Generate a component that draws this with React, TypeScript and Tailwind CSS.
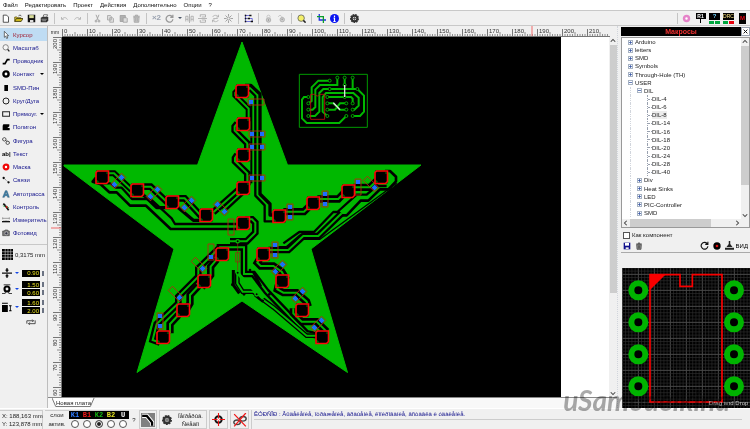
import type { ReactNode } from 'react'

const menu = ['Файл', 'Редактировать', 'Проект', 'Действия', 'Дополнительно', 'Опции', '?']

const icons: Record<string, ReactNode> = {
  new: <path d="M3 1.500h4.500L10 4v7H3z" fill="#fff" stroke="#222" />,
  open: <><path d="M1 10V4h3l1 1h4v2" fill="#e8d44a" stroke="#554a00" /><path d="M1 10l2-4h9l-2.500 4z" fill="#c9b61c" stroke="#332d00" /><path d="M6 2.500c2-1.500 3-1 4 .5" fill="none" stroke="#222" /></>,
  save: <><path d="M1 1h10v10H1z" fill="#111" /><path d="M3 1.500h6v4H3z" fill="#d8dc9a" /><path d="M4 8h4.500v3H4z" fill="#ddd" /></>,
  print: <><path d="M4 4l1-3h5L9 4z" fill="#fff" stroke="#222" strokeWidth=".8" /><path d="M1 5l2-1h8v5l-2 2H1z" fill="#333" /><path d="M2 7h7M3 9h5" stroke="#ccc" strokeWidth=".8" /></>,
  undo: <path d="M2 4v3h3M2.500 7C5 4 8 4 10 7.500" fill="none" stroke="#a8a8a8" />,
  redo: <path d="M10 4v3H7M9.500 7C7 4 4 4 2 7.500" fill="none" stroke="#a8a8a8" />,
  cut: <path d="M4 1l3 7M8 1L5 8M3 8.500h2v2H3zM7 8.500h2v2H7z" fill="none" stroke="#a5a5a5" strokeWidth="1.300" />,
  copy: <path d="M2 2h4l1 1v5H2zM5 5h4l1 1v5H5z" fill="#ddd" stroke="#a0a0a0" />,
  paste: <><path d="M1.500 2h7v8h-7z" fill="#b0b0b0" stroke="#999" /><path d="M5.500 5H10l1 1v5H5.500z" fill="#ddd" stroke="#999" /></>,
  trash: <path d="M1.500 3h9M4.500 2.500V1.500h3v1M2.500 4h7L9 11H3zM5 5v5M7 5v5" fill="#ccc" stroke="#999" />,
  rotate: <path d="M9.500 3.500A4.500 4.500 0 1 0 10.500 7M10.500 1v3.500H7" fill="none" stroke="#999" strokeWidth="1.700" />,
  mirrorH: <path d="M6 0v12M4 3H1v7M4 3v7M8 3h3v7M8 3v7M1 7h3M8 7h3" fill="none" stroke="#a0a0a0" />,
  mirrorV: <path d="M0 6h12M3 4V1h7v3M3 8v3h7V8M5 4h5M5 8h5" fill="none" stroke="#a0a0a0" />,
  align: <path d="M2 4c2-3 6-3 8 0M10 8c-2 3-6 3-8 0M3 6h6M10 1v3H7M2 11V8h3" fill="none" stroke="#a8a8a8" />,
  burst: <><path d="M6 0v3M6 9v3M0 6h3M9 6h3M2 2l2 2M10 2L8 4M2 10l2-2M10 10L8 8" stroke="#888" /><circle cx="6" cy="6" r="2" fill="none" stroke="#888" /></>,
  nodes: <><path d="M2 1v10M2 2h6M2 6h3M2 10h8M8 6h3v4" fill="none" stroke="#4a4ad0" /><path d="M1 1h2v2H1zM1 5h2v2H1zM1 9h2v2H1zM7 1h3v2H7zM5 5h3v2H5zM9 9h3v2H9z" fill="#111" /></>,
  lock: <><path d="M4 5V3c0-2 4-2 4 0v2" fill="none" stroke="#bbb" /><circle cx="6" cy="8" r="3" fill="#ccc" stroke="#aaa" /><path d="M6 7v2" stroke="#888" /></>,
  unlock: <><path d="M2 4c0-3 4-3 5 1" fill="none" stroke="#bbb" /><circle cx="7" cy="7.500" r="3" fill="#ccc" stroke="#aaa" /><path d="M6 7h2" stroke="#888" /></>,
  zoom: <><circle cx="5.500" cy="5.500" r="4.300" fill="#f4f06a" stroke="#555" /><path d="M8.500 8.500l3 3" stroke="#222" strokeWidth="2" /></>,
  crop: <><path d="M3 0v8h9" fill="none" stroke="#1b2ee0" strokeWidth="1.700" /><path d="M0 3.500h8.500V12" fill="none" stroke="#0a9c2a" strokeWidth="1.700" /></>,
  info: <><circle cx="6" cy="6" r="6" fill="#0a14f0" /><path d="M6 2v2M4.800 5.500H6V10M4.500 10h3" fill="none" stroke="#fff" strokeWidth="1.600" /></>,
  gear: <><circle cx="6" cy="6" r="5" fill="#333" stroke="#333" strokeWidth="2" strokeDasharray="2.200 1.200" /><circle cx="6" cy="6" r="2.300" fill="#eee" /><path d="M6 3v6M3 6h6" stroke="#444" /></>,
  ring: <circle cx="6" cy="6" r="3.300" fill="#fff" stroke="#e583c9" strokeWidth="3.300" />,
  pointer: <path d="M3.500 .5v9l2-1.800 1.500 3.600 1.700-.8-1.500-3.400h2.700z" fill="#fff" stroke="#222" strokeWidth=".9" />,
  magnify: <><circle cx="5.500" cy="5" r="4" fill="#f6f6f6" stroke="#555" /><path d="M8.500 8l2.500 3" stroke="#222" strokeWidth="2" /></>,
  track: <path d="M1 10h3.500L8 4h3.500" fill="none" stroke="#000" strokeWidth="2.500" />,
  pad: <circle cx="6" cy="6" r="3.900" fill="#fff" stroke="#000" strokeWidth="3.600" />,
  smd: <path d="M3.500 1.500h5.500v9H3.500z" />,
  circle: <circle cx="6" cy="6" r="4.500" fill="none" stroke="#222" strokeWidth="1.500" />,
  rect: <path d="M1 2.500h10.500v7H1z" fill="none" stroke="#222" strokeWidth="1.600" />,
  polygon: <path d="M2 2h9v3L8 7.500h3.500V11H1V4z" />,
  figure: <><path d="M3.500 .8l2.500 1.500v2.500L3.500 6.200 1 4.800V2.300zM8.500 6l2.500 1.400v2.500l-2.500 1.400L6 9.900V7.400z" fill="#eee" stroke="#222" strokeWidth="1.100" /><path d="M6 5l2 2" stroke="#222" /></>,
  mask: <circle cx="6" cy="6" r="3.500" fill="#fff" stroke="#f00606" strokeWidth="3.300" />,
  link: <><circle cx="2.500" cy="3" r="1.700" /><circle cx="9.800" cy="9.500" r="1.700" /><path d="M2.500 3l7.300 6.500" stroke="#444" strokeDasharray="2 1" /></>,
  auto: <path d="M1 11L5 1h2.500L11 11H8.500l-.8-2.500H4.500L3.500 11zM5 6.500h2.500L6.300 3z" fill="#3d80a8" stroke="#234f6e" strokeWidth=".6" fillRule="evenodd" />,
  check: <><path d="M2 1l3 3M5 4l5 7" stroke="#111" strokeWidth="2.500" /><path d="M2 4l2 2M8 5l2 2" stroke="#0a9c2a" strokeWidth="1.500" /><path d="M6 5l2 2" stroke="#d11" strokeWidth="2" /></>,
  measure: <><path d="M1 3.500h10M1 2v3M11 2v3" stroke="#777" /><path d="M0 8.500h12" stroke="#111" strokeWidth="2" /><path d="M3 6.500v1M6 6v1.500M9 6.500v1" stroke="#555" /></>,
  photo: <><path d="M1 3h2.500l1-1.500h4l1 1.500H11v7H1z" fill="#777" stroke="#444" /><circle cx="6.500" cy="6.500" r="2.300" fill="#334" stroke="#ccc" /></>,
  thickness: <path d="M6 0v3M4.500 2L6 4l1.500-2M6 12V9M4.500 10L6 8l1.500 2M0 6h12" fill="none" stroke="#111" strokeWidth="1.500" />,
  ringSize: <><circle cx="6" cy="6" r="3" fill="none" stroke="#000" strokeWidth="2.500" /><path d="M2 1h8M0 11.500h4M8 11.500h4M4 8v3M8 8v3" stroke="#111" /></>,
  rectSize: <path d="M0 3.500h7V12H0zM0 1h7v1H0zM9.500 4h1v7h-1zM8.500 4h3v1h-3zM8.500 10h3v1h-3z" />,
  swap: <path d="M1 8V4.500h8M7.500 3L9 4.500 7.500 6M11 4v4H3M4.500 6.500L3 8l1.500 1.500" fill="none" stroke="#333" />,
  grid: <><path d="M0 0h12v12H0z" fill="#000" /><path d="M3.500 0v12M6.500 0v12M9.500 0v12M0 3h12M0 6h12M0 9h12" stroke="#ddd" strokeWidth=".6" /></>,
  saveBlue: <><path d="M1 1h10v10H1z" fill="#10108c" /><path d="M3 1.500h6v4H3z" fill="#fff" /><path d="M4 8h4.500v2.500H4z" fill="#eee" /></>,
  trashDark: <path d="M1.500 3h9M4.500 2.500V1.500h3v1M2.500 4h7L9 11H3zM5 5v5M7 5v5" fill="#999" stroke="#333" />,
  rotateDark: <path d="M9.500 3.500A4.500 4.500 0 1 0 10.500 7M10.500 1v3.500H7" fill="none" stroke="#111" strokeWidth="1.500" />,
  target: <><circle cx="6" cy="6" r="5.500" /><circle cx="6" cy="6" r="2" fill="#e01010" /></>,
  stamp: <path d="M5 0h2v4l3 4H2l3-4zM0 9h12v2.500H0z" fill="#222" />,
  cross: <><circle cx="6" cy="6" r="3" fill="none" stroke="#111" strokeWidth="1.800" /><path d="M6 0v12M0 6h12" stroke="#e11" /><circle cx="6" cy="6" r="1" fill="#fff" /></>,
  noLinks: <><ellipse cx="3.500" cy="8" rx="2.800" ry="2" fill="none" stroke="#444" strokeWidth="1.200" /><ellipse cx="8.500" cy="5" rx="2.800" ry="2" fill="none" stroke="#444" strokeWidth="1.200" /><path d="M1 1l10 10.500M11 0L1 11.500" stroke="#f01818" strokeWidth="1.100" /></>,
  bend: <><path d="M0 0h12v12H0z" fill="#808080" /><path d="M1 2.500h4L9.500 8v3" fill="none" stroke="#fff" strokeWidth="3.600" /><path d="M1 2.500h4L9.500 8v3" fill="none" stroke="#000" strokeWidth="2" /></>,
}

function Icon({ name, size = 'size-[9px]' }: { name: string; size?: string }) {
  return (
    <svg viewBox="0 0 12 12" className={`${size} shrink-0`} aria-hidden="true">
      {icons[name]}
    </svg>
  )
}

const toolbarLeft = [
  ['new', 'open', 'save', 'print'],
  ['undo', 'redo'],
  ['cut', 'copy', 'paste', 'trash'],
  ['x2', 'rotate', 'caret', 'mirrorH', 'mirrorV', 'align', 'burst'],
]
const toolbarRight = [['nodes'], ['lock', 'unlock'], ['zoom'], ['crop', 'info'], ['gear']]

const tools = [
  { icon: 'pointer', label: 'Курсор', active: true },
  { icon: 'magnify', label: 'Масштаб' },
  { icon: 'track', label: 'Проводник' },
  { icon: 'pad', label: 'Контакт', more: true },
  { icon: 'smd', label: 'SMD-Пин' },
  { icon: 'circle', label: 'Круг/Дуга' },
  { icon: 'rect', label: 'Прямоуг.', more: true },
  { icon: 'polygon', label: 'Полигон' },
  { icon: 'figure', label: 'Фигура' },
  { icon: 'text', label: 'Текст' },
  { icon: 'mask', label: 'Маска' },
  { icon: 'link', label: 'Связи' },
  { icon: 'auto', label: 'Автотрасса' },
  { icon: 'check', label: 'Контроль' },
  { icon: 'measure', label: 'Измеритель' },
  { icon: 'photo', label: 'Фотовид' },
]

const sizes = [
  { icon: 'thickness', label: 'Ширина', values: ['0.90'] },
  { icon: 'ringSize', label: 'Контакт', values: ['1.50', '0.60'] },
  { icon: 'rectSize', label: 'SMD', values: ['1.60', '2.00'] },
]

const tree = [
  { label: 'Arduino', level: 0, sign: '+' },
  { label: 'letters', level: 0, sign: '+' },
  { label: 'SMD', level: 0, sign: '+' },
  { label: 'Symbols', level: 0, sign: '+' },
  { label: 'Through-Hole (TH)', level: 0, sign: '+' },
  { label: 'USER', level: 0, sign: '-' },
  { label: 'DIL', level: 1, sign: '-' },
  ...['4', '6', '8', '14', '16', '18', '20', '24', '28', '40'].map((n) => ({ label: `DIL-${n}`, level: 2, sign: '' })),
  { label: 'Div', level: 1, sign: '+' },
  { label: 'Heat Sinks', level: 1, sign: '+' },
  { label: 'LED', level: 1, sign: '+' },
  { label: 'PIC-Controller', level: 1, sign: '+' },
  { label: 'SMD', level: 1, sign: '+' },
]

const layers = [
  { name: 'K1', color: 'text-[#2f7cff]' },
  { name: 'B1', color: 'text-[#f01818]' },
  { name: 'K2', color: 'text-[#12b512]' },
  { name: 'B2', color: 'text-[#e0e020]' },
  { name: 'U', color: 'text-white' },
]

function Caret({ color = 'border-t-black' }: { color?: string }) {
  return <span className={`border-x-2 border-t-2 border-x-transparent ${color}`} />
}

function ToolButton({ name }: { name: string }) {
  if (name === 'caret') {
    return <button aria-label="Угол" className="flex w-[5px] items-center justify-center"><Caret color="border-t-gray-600" /></button>
  }
  return (
    <button aria-label={name} className="flex w-[11px] items-center justify-center">
      {name === 'x2' ? <span className="text-[8px] font-bold text-gray-400">×2</span> : <Icon name={name} />}
    </button>
  )
}

function ToolGroups({ groups }: { groups: string[][] }) {
  return groups.map((group, i) => (
    <div key={i} className="contents">
      {i > 0 && <span className="h-[11px] w-px bg-[#c4c4c4]" />}
      <div className="flex gap-[2px]">
        {group.map((name) => <ToolButton key={name} name={name} />)}
      </div>
    </div>
  ))
}

function Toolbar() {
  return (
    <div className="flex h-4 items-center border-y border-[#c8c8c8] bg-[#f0f0f0]">
      <div className="flex items-center gap-1">
        <ToolGroups groups={toolbarLeft} />
      </div>
      <div className="ml-1 flex items-center gap-1">
        <span className="h-[11px] w-px bg-[#c4c4c4]" />
        <ToolGroups groups={toolbarRight} />
      </div>
      <div className="ml-auto flex items-center gap-[3px] pr-[2px]">
        <span className="h-[11px] w-px bg-[#c4c4c4]" />
        <ToolButton name="ring" />
        <button className="flex h-[11px] w-[11px] flex-col items-center">
          <span className="w-[10px] bg-black text-center text-[5px] leading-[6px] font-bold text-white">R1</span>
          <span className="h-[4px] border-l border-dashed border-black" />
        </button>
        <button className="flex h-[11px] w-[11px] flex-col justify-between">
          <span className="w-full bg-black text-center text-[6px] leading-[7px] font-bold text-sky-300">?</span>
          <span className="flex gap-px"><i className="h-[3px] flex-1 bg-green-600" /><i className="h-[3px] flex-1 bg-green-600" /></span>
        </button>
        <button className="flex h-[11px] w-[11px] flex-col justify-between">
          <span className="w-full bg-black text-center text-[5px] leading-[7px] text-amber-200">DRC</span>
          <span className="flex gap-px"><i className="h-[3px] flex-1 bg-green-600" /><i className="h-[3px] flex-1 bg-red-600" /></span>
        </button>
        <button className="flex w-[11px] justify-center">
          <span className="h-[11px] w-[7px] bg-black text-center text-[6px] leading-[11px] font-bold text-red-600">M</span>
        </button>
      </div>
    </div>
  )
}

function Sidebar() {
  return (
    <aside className="w-12 shrink-0 border-r border-[#bdbdbd] pt-[2px]">
      <div className="flex h-[212px] flex-col">
        {tools.map((tool) => (
          <button
            key={tool.label}
            className={`flex flex-1 items-center gap-[3px] pl-[2px] text-left whitespace-nowrap ${tool.active ? 'bg-[#bfdcf3] text-[#a01c30]' : 'text-[#14148c]'}`}
          >
            {tool.icon === 'text'
              ? <span className="w-[8px] text-[6px] font-bold text-black">ab|</span>
              : <Icon name={tool.icon} size="size-[8px]" />}
            <span>{tool.label}</span>
            {tool.more && <span className="mr-[3px] ml-auto flex"><Caret /></span>}
          </button>
        ))}
      </div>
      <div className="mt-1 flex items-center gap-[2px] border-t border-[#c8c8c8] pt-1 pl-[2px]">
        <Icon name="grid" size="size-[11px]" />
        <button className="text-[#222]">0,3175 mm</button>
      </div>
      <div className="mt-2 flex flex-col gap-[3px] pl-[2px]">
        {sizes.map((s) => (
          <div key={s.icon} className="flex items-center gap-[2px]">
            <Icon name={s.icon} size="size-[10px]" />
            <button aria-label={`${s.label}: список`} className="flex w-[6px] justify-center"><Caret color="border-t-blue-700" /></button>
            <div className="flex flex-col gap-px">
              {s.values.map((v) => (
                <div key={v} className="flex items-center gap-[2px]">
                  <input aria-label={s.label} defaultValue={v} className="h-[7px] w-[18px] bg-black pr-px text-right text-[6px] text-[#e8e020]" />
                  <span className="h-[5px] w-[2px] bg-gray-500" />
                </div>
              ))}
            </div>
          </div>
        ))}
        <button aria-label="Поменять местами" className="ml-6 flex"><Icon name="swap" size="size-[10px]" /></button>
      </div>
    </aside>
  )
}

// Rulers run at 2.5px per mm
function RulerX() {
  return (
    <svg className="h-[11px] min-w-0 flex-1 bg-[#f0f0f0]" aria-hidden="true">
      {Array.from({ length: 219 }, (_, i) => (
        <path key={i} d={`M${i * 2.5 + 0.5} 10v-${i % 10 === 0 ? 7 : i % 5 === 0 ? 4 : 2}`} stroke="#777" strokeWidth={i % 10 === 0 ? 1 : 0.8} />
      ))}
      {Array.from({ length: 22 }, (_, i) => (
        <text key={i} x={i * 25 + 2} y="7" fontSize="6" fill="#333">{i * 10}</text>
      ))}
      <path d="M470 0v11" stroke="#f06a6a" />
      <path d="M0 10.500h548" stroke="#777" />
    </svg>
  )
}

function RulerY() {
  return (
    <svg className="h-[360px] w-[13px] shrink-0 bg-[#f0f0f0]" aria-hidden="true">
      {Array.from({ length: 144 }, (_, i) => (
        <path key={i} d={`M12 ${i * 2.5 + 0.5}h-${i % 10 === 0 ? 8 : i % 5 === 0 ? 4 : 2}`} stroke="#777" strokeWidth={i % 10 === 0 ? 1 : 0.8} />
      ))}
      {Array.from({ length: 15 }, (_, i) => (
        <text key={i} transform={`translate(8 ${i * 25 + (i > 10 ? 9 : 12)}) rotate(-90)`} fontSize="6" fill="#333">{200 - i * 10}</text>
      ))}
      <path d="M2 191h11" stroke="#f06a6a" />
      <path d="M12.500 0v360" stroke="#777" />
    </svg>
  )
}

const pads = [
  [242, 91], [243, 124], [243, 155], [243, 188], [243, 223],
  [102, 177], [137, 190], [172, 202], [206, 215],
  [381, 177], [348, 191], [313, 203], [279, 216],
  [222, 254], [204, 281], [183, 310], [163, 337],
  [263, 254], [282, 281], [302, 310], [322, 337],
]

// x, y, angle, filled ends: 1 = first, 2 = second, 3 = both
const parts = [
  [256, 102, 0, 1], [257, 134, 0, 3], [257, 147, 0, 3], [257, 178, 0, 3],
  [118, 181, -45, 3], [154, 193, -45, 3], [188, 204, -45, 3], [221, 208, 45, 3],
  [290, 212, 90, 3], [325, 199, 90, 3], [358, 187, 90, 1], [371, 184, 45, 2],
  [231, 227, 90, 0], [211, 252, 90, 2], [199, 265, 45, 2], [176, 294, 45, 2], [160, 321, 90, 3],
  [275, 250, 90, 3], [279, 268, -45, 3], [299, 295, -45, 3], [318, 324, -45, 3],
]

function Cut({ d, w = 9 }: { d: string; w?: number }) {
  return <path d={d} fill="none" stroke="#000" strokeWidth={w} strokeLinejoin="round" />
}

function Wire({ d, w = 21 }: { d: string; w?: number }) {
  return (
    <>
      <path d={d} fill="none" stroke="#000" strokeWidth={w} />
      <path d={d} fill="none" stroke="#00b800" strokeWidth="6" />
    </>
  )
}

const miniWires = 'M119 47H85L65 67V108L55 115M142 38V60H90L76 74V126L68 134H55M164 38V62M188 38V72M55 153H75L88 140V84L100 72H202L222 92V140L210 153H188M112 153L98 140V96L108 84H190L206 98V122L193 134H188M112 96H183L188 101V115M55 96H42L36 104V160L50 174H148L169 153M112 115H130L150 134H169M112 134H135L150 115H169'
const miniVias = [
  [119, 47], [142, 38], [164, 38], [188, 38], [119, 72], [202, 72], [164, 60],
  [55, 96], [55, 115], [55, 134], [55, 153], [112, 96], [112, 115], [112, 134], [112, 153],
  [169, 115], [169, 134], [169, 153], [188, 115], [188, 134], [188, 153], [164, 96],
]

function Board() {
  return (
    <svg viewBox="62 37 499 360" className="h-[360px] w-[499px] shrink-0 bg-black" role="img" aria-label="Новая плата">
      <path d="M242 42L287.500 165H421L311 249L347.500 372.500L242 301L137 372.500L174 249L64 166V165H197.500Z" fill="#00b800" stroke="#00b800" strokeLinejoin="round" />

      <g transform="translate(230 60) scale(.33333)">
        <Cut d="M45 76H62L90 102V402L120 432V465H140" w={10} />
        <Cut d="M58 90L76 108V407L104 436V484H130" w={7} />
        <Cut d="M64 120V370" w={6} />
        <Wire d="M24 90L16 98V106L56 146V184" w={18} />
        <Wire d="M22 190L14 200V212L52 250V276" w={20} />
        <Wire d="M22 284L15 294V304L52 340V376" w={20} />
        <Wire d="M160 455H222L245 432" w={22} />
        <Wire d="M262 417H325L345 396" w={22} />
        <Wire d="M370 382H420L445 358" w={22} />
        <Cut d="M465 333H480L498 350V364L475 388H450L415 422H392L350 466H325L265 527H210L170 562H145" w={8} />
        <Cut d="M470 378H440L410 404H380L322 456H310L252 516H208L160 550" w={7} />
        <Cut d="M500 370L270 538H215L185 570" w={4} />
        <Wire d="M36 396L-22 450" w={20} />
        <Wire d="M45 478H66L76 488V518L50 544H0" w={20} />
      </g>

      <g transform="translate(60 35) scale(.33333)">
        <Wire d="M145 415H162L215 465" w={18} />
        <Wire d="M250 455H272L325 505" w={20} />
        <Wire d="M355 490H374L425 545" w={20} />
        <Cut d="M240 470L290 518H330M345 510L400 556H430" w={10} />
        <Cut d="M108 428L98 440L122 448L148 472H170L210 512H258L332 582H530" w={8} />
        <Cut d="M125 445H150L168 458H185L216 492H272L335 550L345 567H530" w={7} />
        <Wire d="M535 465L460 532" w={20} />
      </g>

      <g transform="translate(120 200) scale(.33333)">
        <Wire d="M290 142H372V222H400L440 275L560 400L600 408" w={20} />
        <Wire d="M352 218V250L368 275H400L430 300L460 322L560 407H600" w={14} />
        <Cut d="M340 210V255L358 280M400 215L422 260M405 285L430 305" w={9} />
        <Wire d="M300 142L235 205V230L175 290V310L110 372L98 420L120 428" w={20} />
        <Wire d="M290 178L272 200V225L245 262M235 258L210 285V310L190 345M175 345L150 372V400" w={22} />
        <Wire d="M420 175L412 188L422 198H460L485 215L500 240" w={22} />
        <Wire d="M475 255L472 268L490 278H530L560 305L565 320" w={22} />
        <Wire d="M520 325V340L545 365H590L620 395" w={22} />
        <Wire d="M445 150H505L550 108H595L665 40" w={20} />
        <path d="M352 218L372 240L430 296" stroke="#00b800" strokeWidth="10" />
        {[[390, 210], [337, 254], [372, 283], [448, 283]].map(([x, y]) => <circle key={x} cx={x} cy={y} r="4" />)}
        {[[353, 124], [353, 218], [410, 283]].map(([x, y]) => (
          <circle key={x + y} cx={x} cy={y} r="5" stroke="#00b800" strokeWidth="4" />
        ))}
        <path d="M353 130V212M347 158h12v28h-12z" fill="none" stroke="#a02010" strokeWidth="2" />
      </g>

      {parts.map(([x, y, angle, ends]) => (
        <g key={`${x}-${y}`} transform={`translate(${x} ${y}) rotate(${angle})`}>
          {(ends & 1) > 0 && <path d="M-7-2.200h4v4.400h-4z" fill="#1e6cff" />}
          {(ends & 2) > 0 && <path d="M3-2.200h4v4.400h-4z" fill="#1e6cff" />}
          <path d="M-8-3H8V3H-8z" fill="none" stroke="#b02a10" strokeWidth=".9" />
        </g>
      ))}

      {pads.map(([x, y]) => (
        <g key={`${x}-${y}`} transform={`translate(${x} ${y})`}>
          <path d="M-5.500-6.500L-3-6.500H6.500V6.500H-6.500V-3.500z" />
          <path d="M-5 3v2h2M5-3v-2" fill="none" stroke="#00a000" strokeWidth=".8" />
          <path d="M-6-2.500L-6-4.500L-4.500-6H6.500V4.500L4.500 6.500H-6z" fill="none" stroke="#ff0808" strokeWidth="1.600" />
        </g>
      ))}

      <g transform="translate(290 65) scale(.33333)" fill="none">
        <path d="M28 28h204v159H28z" stroke="#009a00" strokeWidth="3" />
        <path d={miniWires} stroke="#00b800" strokeWidth="6" />
        {miniVias.map(([x, y]) => (
          <circle key={`${x}-${y}`} cx={x} cy={y} r="4.500" fill="#000" stroke="#00a800" strokeWidth="3" />
        ))}
        <path d="M62 163V88H74q8 10 16 0H104V163z" stroke="#c01010" strokeWidth="2.500" />
        <path d="M164 60V96M130 113L150 134" stroke="#ddd" strokeWidth="4" />
      </g>
    </svg>
  )
}

function ScrollArrow({ points, label }: { points: string; label: string }) {
  return (
    <button aria-label={label} className="flex size-[8px] shrink-0 items-center justify-center">
      <svg viewBox="0 0 8 8" className="size-[6px]"><polyline points={points} fill="none" stroke="#444" strokeWidth="1.400" /></svg>
    </button>
  )
}

function Workspace() {
  return (
    <main className="flex min-w-0 flex-1 flex-col">
      <div className="flex">
        <span className="w-[14px] shrink-0 pt-[3px] text-center text-[5px] leading-[6px] text-[#222]">mm</span>
        <RulerX />
      </div>
      <div className="flex">
        <div className="flex shrink-0 pl-px"><RulerY /></div>
        <div className="flex min-w-0 flex-1 bg-white">
          <Board />
        </div>
        <div className="flex w-[8px] shrink-0 flex-col items-center bg-[#f0f0f0]">
          <ScrollArrow points="1,5 4,2 7,5" label="Вверх" />
          <div className="h-[248px] w-[7px] bg-[#cdcdcd]" />
          <div className="mt-auto"><ScrollArrow points="1,3 4,6 7,3" label="Вниз" /></div>
        </div>
      </div>
      <div className="flex flex-1 items-start border-t border-[#888] bg-[#f8f8f8] pl-1">
        <button className="relative flex h-[9px] items-center px-[4px] text-[#222]">
          <svg viewBox="0 0 46 9" preserveAspectRatio="none" className="absolute inset-0 size-full" aria-hidden="true">
            <path d="M0 0l4 8.500h37L45 0" fill="#fff" stroke="#555" strokeWidth=".8" />
          </svg>
          <span className="relative">Новая плата</span>
        </button>
      </div>
    </main>
  )
}

function TreeRow({ label, level, sign }: { label: string; level: number; sign: string }) {
  return (
    <li className="flex flex-1 items-center">
      {level > 0 && <span className="ml-1 w-[9px] self-stretch border-l border-dotted border-gray-300" />}
      {level > 1 && <span className="w-[9px] self-stretch" />}
      {sign ? (
        <button aria-label={label} className={`${level === 0 ? 'ml-[2px]' : '-ml-[2px]'} mr-[2px] flex size-[5px] items-center justify-center border border-[#a8b4c4] bg-white`}>
          <svg viewBox="0 0 5 5" className="size-[3px] shrink-0"><path d={sign === '+' ? 'M0 2.500h5M2.500 0v5' : 'M0 2.500h5'} stroke="#3050a0" strokeWidth="1.200" /></svg>
        </button>
      ) : (
        <span className="-ml-px flex w-[5px] items-center self-stretch border-l border-dotted border-gray-400"><i className="w-full border-t border-dotted border-gray-400" /></span>
      )}
      <span className={label === 'DIL-8' ? 'bg-[#ececec]' : ''}>{label}</span>
    </li>
  )
}

function MacroPreview() {
  const pinRows = [169, 265, 361, 457]
  return (
    <svg viewBox="216 102 384 420" preserveAspectRatio="xMinYMin slice" className="h-[140px] w-full bg-black" role="img" aria-label="DIL-8">
      {Array.from({ length: 41 }, (_, i) => (
        <path key={`v${i}`} d={`M${217 + i * 9.6} 102V522`} stroke={i % 5 === 0 ? '#4a4a4a' : '#2e2e2e'} strokeWidth={i % 5 === 0 ? 3 : 2} />
      ))}
      {Array.from({ length: 44 }, (_, i) => (
        <path key={`h${i}`} d={`M216 ${121 + (i - 2) * 9.6}H600`} stroke={i % 5 === 2 ? '#4a4a4a' : '#2e2e2e'} strokeWidth={i % 5 === 2 ? 3 : 2} />
      ))}
      <path d="M300 122H390V157H427V122H516V504H300Z" fill="none" stroke="#f80000" strokeWidth="5" />
      <path d="M300 122H346L300 168Z" fill="#f80000" />
      {pinRows.map((y) => [265, 552].map((x) => (
        <circle key={`${x}-${y}`} cx={x} cy={y} r="21" fill="#000" stroke="#00b400" strokeWidth="18" />
      )))}
      <text x="595" y="514" textAnchor="end" fontSize="18" fill="#c8c8c8">Drag and Drop</text>
    </svg>
  )
}

function MacroPanel() {
  return (
    <aside className="w-[129px] shrink-0 pt-px">
      <div className="flex h-[9px]">
        <h2 className="flex-1 bg-black text-center text-[7px] leading-[9px] font-bold text-[#f03030]">Макросы</h2>
        <button aria-label="Закрыть" className="flex w-[9px] items-center justify-center border border-gray-400 bg-white">
          <svg viewBox="0 0 8 8" className="size-[5px]"><path d="M1 1l6 6M7 1L1 7" stroke="#111" strokeWidth="1.600" /></svg>
        </button>
      </div>
      <div className="mt-px border border-[#999] bg-white">
        <div className="flex h-[181px]">
          <ul className="flex h-[179px] min-w-0 flex-1 flex-col pl-1 text-[#222]">
            {tree.map((row, i) => <TreeRow key={i} {...row} />)}
          </ul>
          <div className="flex w-[8px] flex-col bg-[#f0f0f0]">
            <ScrollArrow points="1,5 4,2 7,5" label="Вверх" />
            <div className="h-[139px] bg-[#cdcdcd]" />
            <div className="mt-auto"><ScrollArrow points="1,3 4,6 7,3" label="Вниз" /></div>
          </div>
        </div>
        <div className="flex h-[8px] bg-[#f0f0f0]">
          <ScrollArrow points="5,1 2,4 5,7" label="Влево" />
          <div className="w-[81px] bg-[#cdcdcd]" />
          <div className="mr-[8px] ml-auto"><ScrollArrow points="3,1 6,4 3,7" label="Вправо" /></div>
        </div>
      </div>
      <label className="mt-[3px] flex items-center gap-[2px] pl-[2px] text-[#222]">
        <input type="checkbox" className="size-[7px] appearance-none border border-[#555] bg-white" />
        Как компонент
      </label>
      <div className="flex h-[13px] items-center gap-[4px] px-[2px]">
        <button aria-label="Сохранить" className="flex"><Icon name="saveBlue" size="size-[8px]" /></button>
        <button aria-label="Удалить" className="flex"><Icon name="trashDark" size="size-[8px]" /></button>
        <button aria-label="Повернуть" className="ml-auto flex"><Icon name="rotateDark" size="size-[9px]" /></button>
        <button aria-label="Слой" className="flex"><Icon name="target" size="size-[8px]" /></button>
        <button className="flex items-center gap-[2px]"><Icon name="stamp" size="size-[9px]" />ВИД</button>
      </div>
      <div className="h-4 border-t border-[#aaa]" />
      <div className="flex pl-px"><MacroPreview /></div>
    </aside>
  )
}

function StatusBar() {
  return (
    <footer className="flex h-[21px] items-stretch gap-[2px] border-t border-white bg-[#f0f0f0] pt-px text-[#222]">
      <div className="flex w-[43px] flex-col justify-center border-t border-r border-[#ccc] pl-[2px] whitespace-nowrap">
        <span>X: 188,163 mm</span>
        <span>Y: 123,878 mm</span>
      </div>
      <div className="grid grid-cols-[24px_repeat(5,12px)] grid-rows-[8px_10px] items-center border-t border-[#ccc] text-center">
        <span>слои</span>
        {layers.map((l) => <span key={l.name} className={`bg-black font-mono text-[7px] font-bold ${l.color}`}>{l.name}</span>)}
        <span>актив.</span>
        {layers.map((l) => (
          <input key={l.name} type="radio" name="layer" aria-label={l.name} defaultChecked={l.name === 'K2'} className="mx-auto size-[8px] appearance-none rounded-full border border-[#555] bg-white checked:bg-[#222] checked:shadow-[inset_0_0_0_1px_white]" />
        ))}
      </div>
      <button className="w-[6px]">?</button>
      <button aria-label="Изгиб" className="flex w-[18px] items-center justify-center border border-[#ccc]"><Icon name="bend" size="size-[14px]" /></button>
      <button className="flex w-[48px] items-center gap-[3px] border border-[#ccc] pl-[2px]">
        <Icon name="gear" size="size-[10px]" />
        <span className="flex-1">Íåïðåðûâ. Ñëåäîì</span>
      </button>
      <button aria-label="Центр" className="flex w-[19px] items-center justify-center border border-[#ccc]"><Icon name="cross" size="size-[13px]" /></button>
      <button aria-label="Убрать связи" className="flex w-[19px] items-center justify-center border border-[#ccc]"><Icon name="noLinks" size="size-[14px]" /></button>
      <div className="min-w-0 flex-1 border-l border-[#ccc] pl-[2px]">
        <p className="mr-2 overflow-hidden border-b border-[#ccc] pb-px whitespace-nowrap text-[#14148c]">
          ÊÓÐÑÎÐ : Âûäåëåíèå, îòðàæåíèå, âðàùåíèå, êîïèðîâàíèå, âñòàâêà è óäàëåíèå.
        </p>
      </div>
    </footer>
  )
}

export default function App() {
  return (
    <div className="relative flex min-h-screen flex-col bg-[#f0f0f0] font-['Liberation_Sans',sans-serif] text-[6px] leading-[8px]">
      <nav className="flex h-[10px] items-center gap-[7px] bg-white pl-[3px]">
        {menu.map((item) => <button key={item} className="text-[#111]">{item}</button>)}
      </nav>
      <Toolbar />
      <div className="flex">
        <Sidebar />
        <Workspace />
        <div className="w-1 shrink-0 border-l border-dotted border-gray-300" />
        <MacroPanel />
      </div>
      <StatusBar />
      <span className="pointer-events-none absolute right-[20px] bottom-[14px] font-['Lato',sans-serif] text-[28px] leading-[30px] font-bold text-[#aaa] italic mix-blend-multiply">uSamodelkina</span>
    </div>
  )
}
